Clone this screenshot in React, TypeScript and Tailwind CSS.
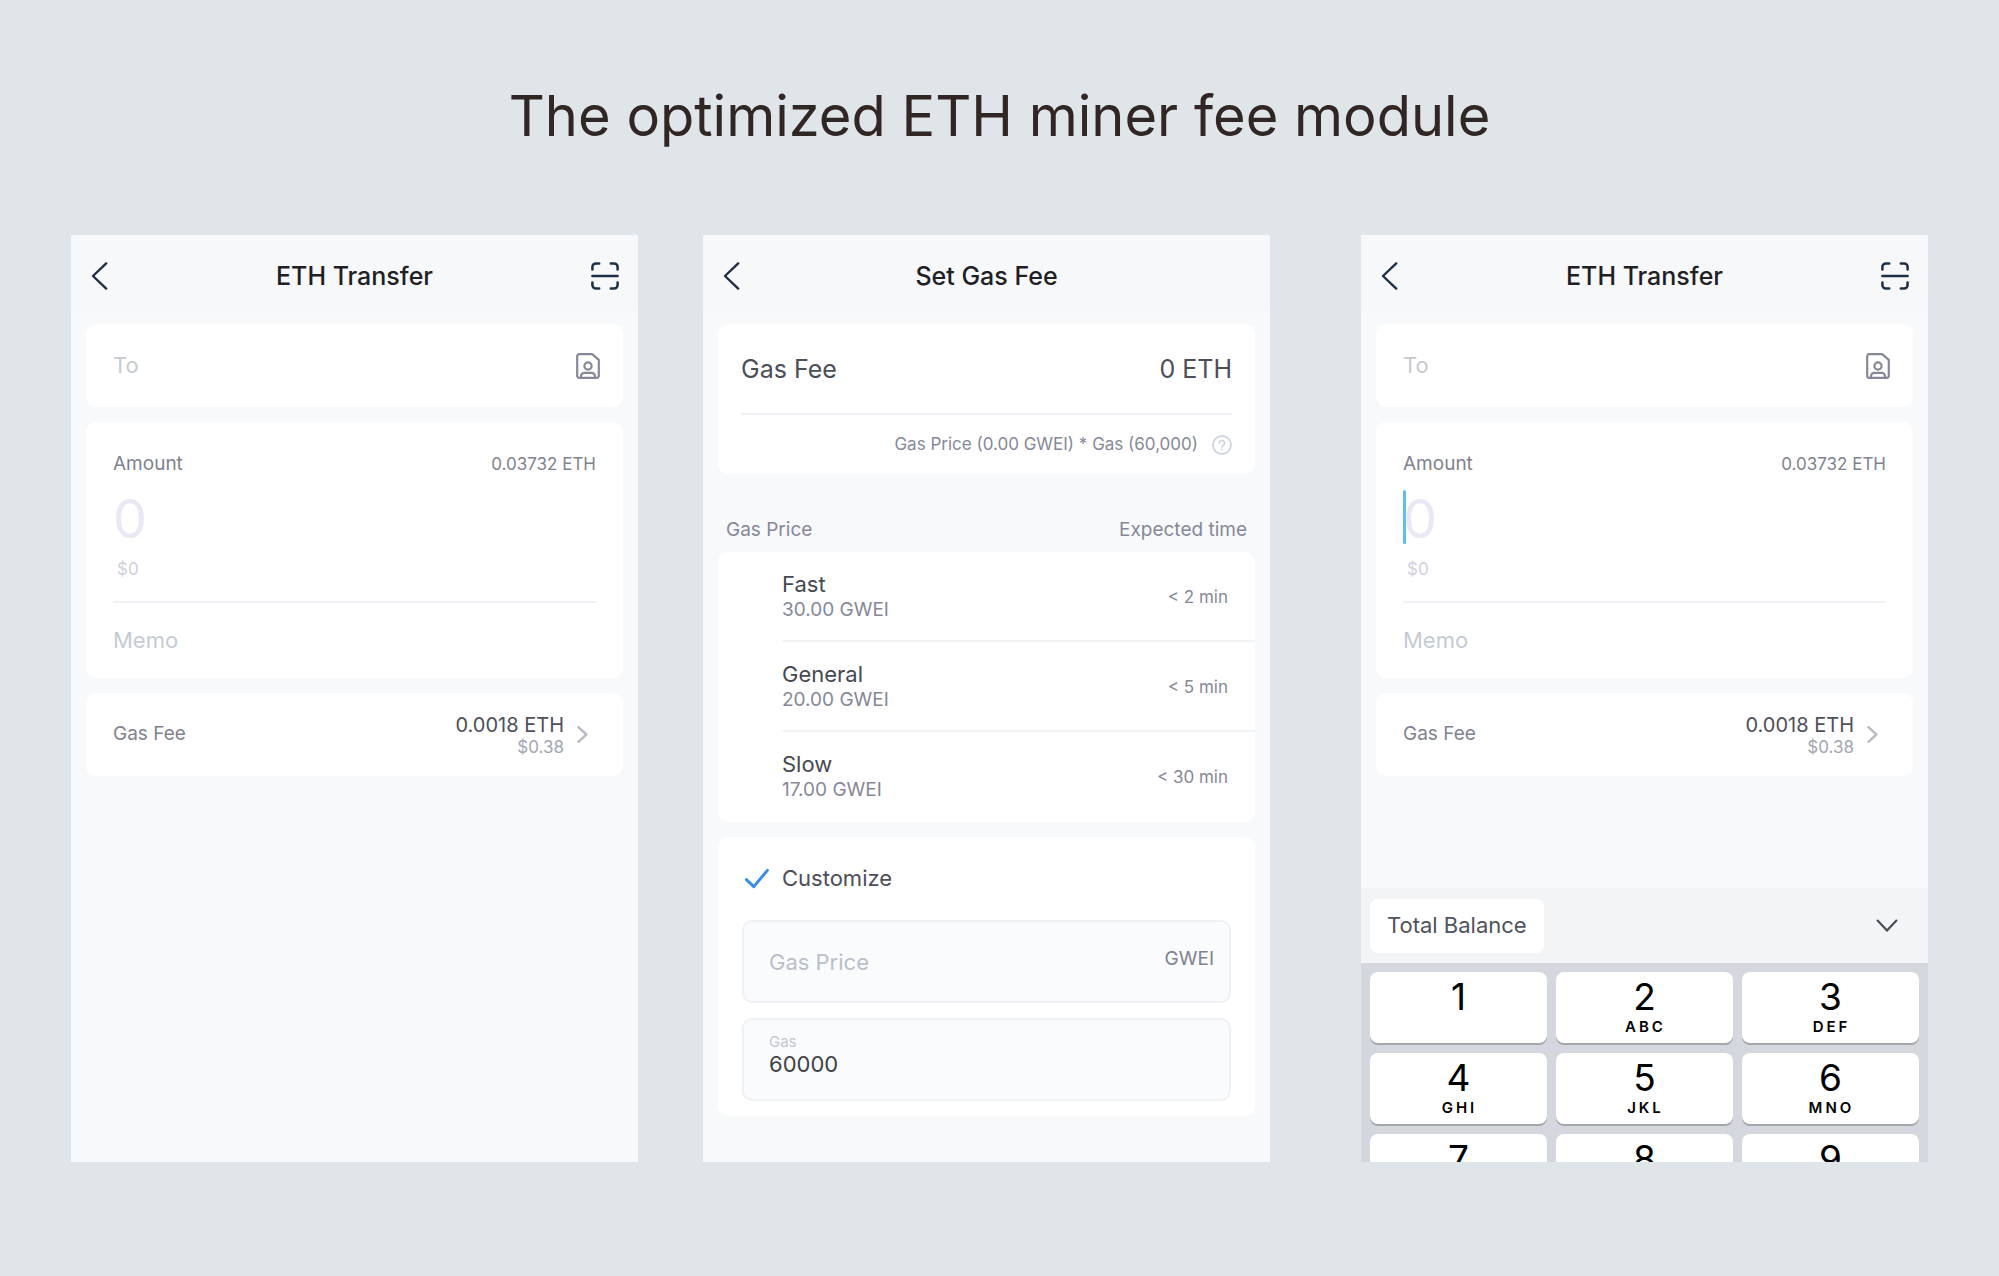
import type { ReactNode } from "react";

type GasOption = { name: string; price: string; time: string };

const gasOptions: GasOption[] = [
  { name: "Fast", price: "30.00 GWEI", time: "< 2 min" },
  { name: "General", price: "20.00 GWEI", time: "< 5 min" },
  { name: "Slow", price: "17.00 GWEI", time: "< 30 min" },
];

const keys = [
  { digit: "1" },
  { digit: "2", letters: "ABC" },
  { digit: "3", letters: "DEF" },
  { digit: "4", letters: "GHI" },
  { digit: "5", letters: "JKL" },
  { digit: "6", letters: "MNO" },
  { digit: "7" },
  { digit: "8" },
  { digit: "9" },
];

const BackIcon = () => (
  <svg width="17" height="28" viewBox="0 0 17 28" fill="none" stroke="currentColor" strokeWidth="2.4">
    <path d="M15.2 1.4 2 14l13.2 12.6" strokeLinecap="round" strokeLinejoin="round" />
  </svg>
);

const ScanIcon = () => (
  <svg width="28" height="28" viewBox="0 0 28 28" fill="none" stroke="currentColor" strokeWidth="2.5" strokeLinecap="round">
    <path d="M1.4 7.4V5a3.6 3.6 0 0 1 3.6-3.6h3.2M19.8 1.4H23A3.6 3.6 0 0 1 26.6 5v2.4M26.6 20.6V23a3.6 3.6 0 0 1-3.6 3.6h-3.2M8.2 26.6H5A3.6 3.6 0 0 1 1.4 23v-2.4M1.4 14h25.2" />
  </svg>
);

const ContactIcon = () => (
  <svg width="24" height="26" viewBox="0 0 24 26" fill="none" stroke="currentColor" strokeWidth="2.2" strokeLinejoin="round">
    <path d="M3 1.2h13.2l6.6 5.6V23a1.8 1.8 0 0 1-1.8 1.8H3A1.8 1.8 0 0 1 1.2 23V3A1.8 1.8 0 0 1 3 1.2Z" />
    <circle cx="12" cy="13" r="3.6" />
    <path d="M5 24.4v-1.2a3.4 3.4 0 0 1 3.4-3.4h7.2a3.4 3.4 0 0 1 3.4 3.4v1.2" />
  </svg>
);

const Header = ({ title, scan }: { title: string; scan?: boolean }) => (
  <header className="flex h-[74px] items-center justify-between bg-[#f7f8fa] px-[19px] pt-2 text-[#1d3046]">
    <button aria-label="Back" className="w-7 pl-px">
      <BackIcon />
    </button>
    <h2 className="text-[25px] leading-8 font-medium text-[#1f2023]">{title}</h2>
    {scan ? (
      <button aria-label="Scan">
        <ScanIcon />
      </button>
    ) : (
      <span className="w-7" />
    )}
  </header>
);

const Card = ({ className, children }: { className?: string; children: ReactNode }) => (
  <section className={`rounded-[10px] bg-white ${className ?? ""}`}>{children}</section>
);

const Phone = ({ children }: { children: ReactNode }) => (
  <article className="flex h-[927px] min-w-0 flex-1 flex-col overflow-hidden bg-[#f7f9fb]">{children}</article>
);

const TransferForm = ({ id, focused }: { id: string; focused?: boolean }) => (
  <div className="flex flex-col gap-[15px] p-[15px]">
    <Card className="flex h-[83px] items-center pr-[23px] pl-[27px]">
      <input
        aria-label="To"
        placeholder="To"
        className="min-w-0 flex-1 pb-0.5 text-[22px] leading-7 outline-none placeholder:text-[#c6cacf]"
      />
      <button aria-label="Contacts" className="text-[#868899]">
        <ContactIcon />
      </button>
    </Card>

    <Card className="px-[27px] pt-7">
      <div className="flex items-center justify-between leading-7 text-[#80828f]">
        <label htmlFor={`amount-${id}`} className="text-[19px]">Amount</label>
        <span className="text-[17px]">0.03732 ETH</span>
      </div>
      <div className="relative mt-2">
        <input
          id={`amount-${id}`}
          placeholder="0"
          className="block h-16 w-full text-[54px] outline-none placeholder:text-[#e8e9f4]"
        />
        {/* caret */}
        {focused && <span className="absolute top-1 left-0 h-[54px] w-[3px] rounded-full bg-[#5fbdf3]" />}
      </div>
      <p className="px-1 pt-[5px] pb-[18px] text-[17px] leading-7 text-[#cfd0e0]">$0</p>
      <div className="flex h-[77px] items-center border-t-2 border-[#f0f2f7] pb-0.5">
        <input
          aria-label="Memo"
          placeholder="Memo"
          className="w-full text-[22px] leading-7 outline-none placeholder:text-[#c5cbd3]"
        />
      </div>
    </Card>

    <Card>
      <button className="flex h-[83px] w-full items-center px-[27px] text-left">
        <span className="flex-1 text-[19px] text-[#80828f]">Gas Fee</span>
        <span className="flex flex-col text-right">
          <span className="text-[20px] leading-6 text-[#4e505b]">0.0018 ETH</span>
          <span className="text-[17px] leading-5 text-[#a2a6b2]">$0.38</span>
        </span>
        <svg className="mr-2 ml-[13px]" width="11" height="17" viewBox="0 0 11 17" fill="none" stroke="#b9bbc5" strokeWidth="2.4">
          <path d="m1.4 1.2 8 7.3-8 7.3" strokeLinecap="round" strokeLinejoin="round" />
        </svg>
      </button>
    </Card>
  </div>
);

const GasRow = ({ item, last }: { item: GasOption; last: boolean }) => (
  <label className="flex h-[90px] cursor-pointer pl-16">
    <input type="radio" name="gas" className="sr-only" />
    <span
      className={`flex flex-1 items-center justify-between border-b-2 pt-1 pr-[27px] ${last ? "border-transparent" : "border-[#f3f4f8]"}`}
    >
      <span className="flex flex-col">
        <span className="text-[22px] leading-6 text-[#464852]">{item.name}</span>
        <span className="text-[19px] leading-7 text-[#868899]">{item.price}</span>
      </span>
      <span className="text-[17px] text-[#868899]">{item.time}</span>
    </span>
  </label>
);

const GasFeeForm = () => (
  <div className="flex flex-col p-[15px]">
    <Card className="px-[23px]">
      <div className="flex h-[91px] items-center justify-between border-b-2 border-[#eff2f6] pt-0.5 text-[25px] text-[#4c4e59]">
        <span>Gas Fee</span>
        <span>0 ETH</span>
      </div>
      <div className="flex h-[59px] items-center justify-end gap-3.5 pt-px text-[17px] text-[#868899]">
        <span>Gas Price (0.00 GWEI) * Gas (60,000)</span>
        <button aria-label="Help">
          <svg width="20" height="20" viewBox="0 0 20 20" fill="none" stroke="#d0d3e2" strokeWidth="1.8" strokeLinecap="round">
            <circle cx="10" cy="10" r="9" />
            <path d="M7.4 7.9a2.6 2.5 0 1 1 4 2.1c-.9.6-1.4 1-1.4 1.9" />
            <path d="M10 14.4v.2" strokeWidth="2" />
          </svg>
        </button>
      </div>
    </Card>

    <div className="flex items-end justify-between px-2 pt-[42px] pb-2 text-[19px] leading-7 text-[#868899]">
      <span>Gas Price</span>
      <span>Expected time</span>
    </div>

    <Card>
      {gasOptions.map((item, i) => (
        <GasRow key={item.name} item={item} last={i === gasOptions.length - 1} />
      ))}
    </Card>

    <Card className="mt-[15px] px-6 pb-[15px]">
      <label className="flex h-[83px] cursor-pointer items-center text-[22px] text-[#4c4e59]">
        <input type="radio" name="gas" defaultChecked className="peer sr-only" />
        <svg className="invisible mr-3 ml-0.5 peer-checked:visible" width="26" height="22" viewBox="0 0 26 22" fill="none" stroke="#3b8de8" strokeWidth="3">
          <path d="m2.4 11.6 7.4 7L23.4 2.4" strokeLinecap="round" strokeLinejoin="round" />
        </svg>
        Customize
      </label>
      <div className="flex flex-col gap-[15px]">
        <div className="flex h-[83px] items-center rounded-[10px] border-2 border-[#eff1f7] bg-[#fafbfd] pr-[15px] pl-[25px]">
          <input
            aria-label="Gas Price"
            placeholder="Gas Price"
            className="min-w-0 flex-1 text-[22px] leading-7 outline-none placeholder:text-[#b9c0ca]"
          />
          <span className="pb-1 text-[19px] text-[#80828f]">GWEI</span>
        </div>
        <div className="flex h-[83px] flex-col rounded-[10px] border-2 border-[#eff1f7] bg-[#fafbfd] px-[25px] pt-3">
          <label htmlFor="gas-limit" className="text-[15px] leading-5 text-[#c3c7cf]">Gas</label>
          <input id="gas-limit" defaultValue="60000" className="w-full text-[22px] leading-6 text-[#3e4048] outline-none" />
        </div>
      </div>
    </Card>
  </div>
);

const Keyboard = () => (
  <div className="mt-auto h-[274px] shrink-0">
    <div className="flex h-[75px] items-center justify-between bg-[#f2f4f6] pr-[30px] pl-[9px]">
      <button className="h-[54px] rounded-lg bg-white px-[17px] text-[22px] text-[#50525d]">Total Balance</button>
      <button aria-label="Hide keyboard">
        <svg width="22" height="14" viewBox="0 0 22 14" fill="none" stroke="#4a4c57" strokeWidth="2.2">
          <path d="m1.6 1.6 9.4 10 9.4-10" strokeLinecap="round" strokeLinejoin="round" />
        </svg>
      </button>
    </div>
    <div className="grid grid-cols-3 gap-x-[9px] gap-y-2.5 bg-[#d4d7dd] p-[9px]">
      {keys.map((k) => (
        <button
          key={k.digit}
          className="flex h-[71px] flex-col items-center rounded-lg bg-white pt-[5px] text-black shadow-[0_2px_0_#a3a6ab]"
        >
          <span className="text-[37px] leading-10">{k.digit}</span>
          {k.letters && <span className="pl-0.5 text-[15px] leading-5 font-semibold tracking-[3px]">{k.letters}</span>}
        </button>
      ))}
    </div>
  </div>
);

const App = () => {
  return (
    <main className="min-h-screen bg-[#e0e5e9] px-[71px] pb-[114px] font-['Inter',sans-serif]">
      <h1 className="flex h-[235px] items-center justify-center pb-[3px] text-[56px] text-[#302624]">
        The optimized ETH miner fee module
      </h1>
      <div className="flex">
        <Phone>
          <Header title="ETH Transfer" scan />
          <TransferForm id="empty" />
        </Phone>
        <div className="w-[65px]" />
        <Phone>
          <Header title="Set Gas Fee" />
          <GasFeeForm />
        </Phone>
        <div className="w-[91px]" />
        <Phone>
          <Header title="ETH Transfer" scan />
          <TransferForm id="focused" focused />
          <Keyboard />
        </Phone>
      </div>
    </main>
  );
};

export default App;
